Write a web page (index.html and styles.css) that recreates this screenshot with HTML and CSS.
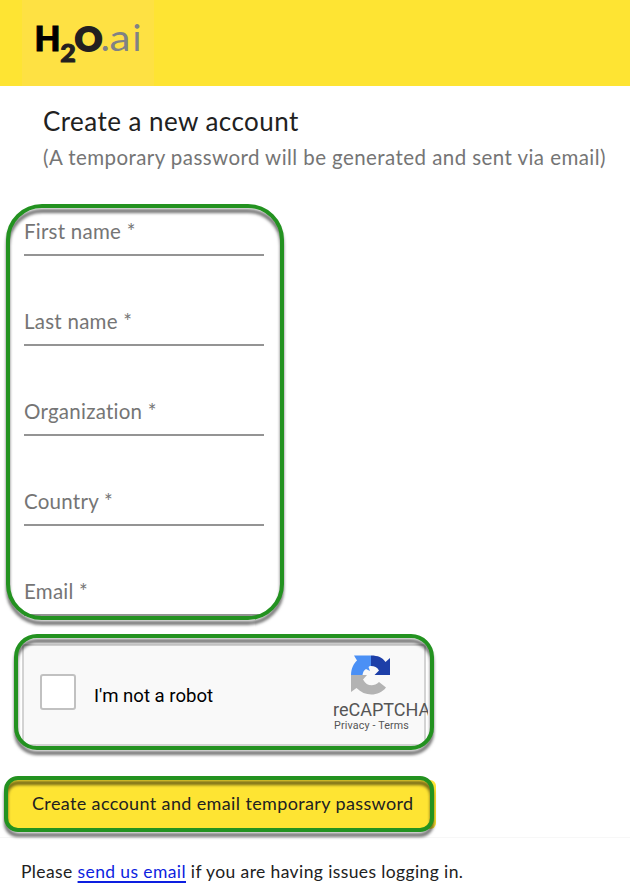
FILE: index.html
```html
<!DOCTYPE html>
<html lang="en">
<head>
<meta charset="utf-8">
<title>Create a new account</title>
<link rel="stylesheet" href="styles.css">
</head>
<body>
<header class="topbar">
  <div class="brand">
    <svg width="132" height="86" viewBox="22 0 132 86" role="img" aria-label="H2O.ai">
      <g class="mark">
        <text class="black" x="34.500" y="51.3" font-size="33.5" textLength="26" lengthAdjust="spacingAndGlyphs">H</text>
        <text x="60.3" y="62.3" font-size="24" textLength="15.5" lengthAdjust="spacingAndGlyphs">2</text>
        <text class="heavy" x="74.7" y="51" font-size="32.5" textLength="27.5" lengthAdjust="spacingAndGlyphs">O</text>
      </g>
      <text class="suffix" y="51"><tspan x="100.5" font-size="40">.</tspan><tspan x="109.5" font-size="37" textLength="21" lengthAdjust="spacingAndGlyphs">a</tspan><tspan x="132.500" font-size="37">i</tspan></text>
    </svg>
  </div>
</header>
<main>
  <section class="intro">
    <h1>Create a new account</h1>
    <p>(A temporary password will be generated and sent via email)</p>
  </section>
  <form>
    <div class="fields ring">
      <label class="field">First name *</label>
      <label class="field">Last name *</label>
      <label class="field">Organization *</label>
      <label class="field">Country *</label>
      <label class="field">Email *</label>
    </div>
    <div class="captcha ring">
      <div class="widget">
        <span class="checkbox"></span>
        <span class="robot">I'm not a robot</span>
        <div class="badge">
          <svg width="40" height="40" viewBox="0 0 40 40" aria-hidden="true">
            <path fill="#4b90f5" d="M20 .5V11c-1.500 0-2 .5-2.500 1l1.500 4-4-2c-2 1-3 3-3.500 6H0C.3 13 2.500 9 6 5.500L3 .5z"/>
            <path fill="#1d3fa8" d="M20 .5c7 0 11.500 2 14.500 6.500L39 3v17H23.500l4.500-4.500C26 12 23.500 11 20 11z"/>
            <path fill="#b3b3b3" d="M0 20h16l-4 4.500c3.500 7 11 7.500 16 2.500l7 5.500c-7 9-21 9.500-29.500.5L0 37z"/>
          </svg>
          <span class="name">reCAPTCHA</span>
          <span class="legal">Privacy - Terms</span>
        </div>
      </div>
    </div>
    <div class="submit ring"><button type="button">Create account and email temporary password</button></div>
  </form>
</main>
<footer><p>Please <a href="#">send us email</a> if you are having issues logging in.</p></footer>
</body>
</html>
```
FILE: styles.css
```css
* { box-sizing: border-box; }
body {
  margin: 0;
  height: 896px;
  overflow: hidden;
  background: #fff;
  color: #212121;
  font-family: Lato, "Liberation Sans", sans-serif;
}
.topbar { height: 86px; padding-left: 22px; background: #fee433; }
.brand { width: 132px; height: 86px; background: #fee143; }
.brand svg { display: block; }
.mark { font-family: Lato, sans-serif; font-weight: 900; fill: #231f20; stroke: #231f20; stroke-width: 1; }
.mark .black { fill: #000; stroke: #000; }
.mark .heavy { stroke-width: 2; }
.suffix { font-family: Lato, sans-serif; font-weight: 400; fill: #808285; }
.intro { height: 118px; padding: 18px 0 0 43px; white-space: nowrap; }
h1 { margin: 0; font-size: 26px; font-weight: 400; line-height: 34px; letter-spacing: .45px; }
.intro p { margin: 6px 0 0; color: #757575; font-size: 20.5px; line-height: 26px; letter-spacing: .43px; }

.ring { position: relative; }
.ring::after {
  content: "";
  position: absolute;
  inset: 0;
  border: 4px solid #239220;
  border-radius: 36px;
  filter: drop-shadow(0 5px 1.5px rgba(0, 0, 0, .55));
  pointer-events: none;
}
.fields { width: 278px; height: 416px; margin-left: 6px; padding: 0 20px 0 18px; }
.field {
  display: flex;
  align-items: flex-end;
  height: 90px;
  padding-bottom: 10px;
  border-bottom: 2px solid #949494;
  color: #757575;
  font-size: 20.5px;
  line-height: 26px;
  letter-spacing: .25px;
}
.field:first-child { height: 52px; }

.captcha { width: 420px; height: 116px; margin: 14px 0 0 14px; padding: 10px 0 0 8px; }
.captcha::after { border-radius: 23px; }
.widget {
  display: flex;
  align-items: flex-start;
  width: 404px;
  height: 102px;
  border: 2px solid #d3d3d3;
  border-radius: 3px;
  background: #f9f9f9;
  font-family: Roboto, sans-serif;
}
.checkbox { flex: none; width: 36px; height: 36px; margin: 28px 0 0 16px; border: 2px solid #c1c1c1; border-radius: 3px; background: #fff; }
.robot { flex: none; width: 239px; margin: 38px 0 0 18px; color: #000; font-size: 18.6px; line-height: 24px; }
.badge { display: flex; flex: none; flex-direction: column; width: 95px; margin-top: 9px; overflow: hidden; color: #555; white-space: nowrap; }
.badge svg { margin-left: 18px; }
.name { margin-top: 3px; font-size: 18px; line-height: 24px; }
.legal { margin-top: -2px; padding-left: 1px; font-size: 10.7px; line-height: 12px; letter-spacing: .16px; }

.submit { width: 430px; height: 56px; margin: 26px 0 0 4px; padding: 4px 0 0 4px; }
.submit::after { border-radius: 14px; }
button {
  display: block;
  width: 428px;
  height: 49px;
  padding: 0 0 3px 24px;
  border: 0;
  border-radius: 6px;
  background: #fee433;
  color: #212121;
  font: 400 18px/46px Lato, sans-serif;
  text-align: left;
  letter-spacing: .37px;
  white-space: nowrap;
}
footer { height: 59px; margin-top: 5px; padding: 23px 0 0 21px; border-top: 1px solid #f7f7f7; }
footer p { margin: 0; font-size: 17.5px; line-height: 22px; letter-spacing: .39px; white-space: nowrap; }
footer a { color: #0d1fe0; text-decoration-thickness: 2px; text-underline-offset: 3px; text-decoration-skip-ink: none; }
```
